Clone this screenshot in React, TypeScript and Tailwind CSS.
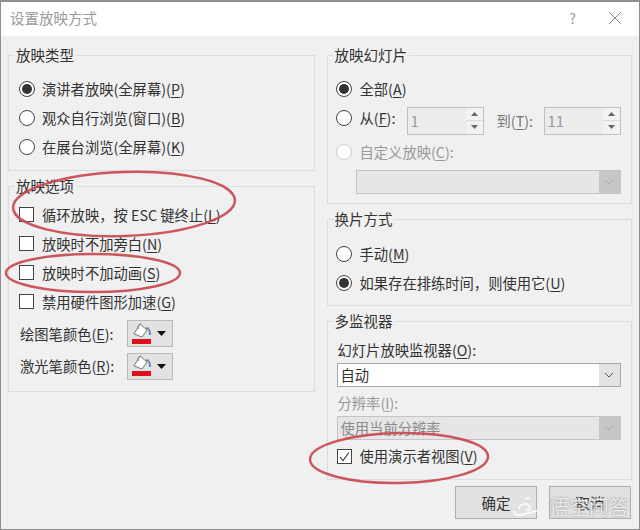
const font = { fontFamily: '"Noto Sans CJK SC", "Liberation Sans", sans-serif' };

function Radio({ checked, disabled }: { checked?: boolean; disabled?: boolean }) {
  return (
    <span className={`flex h-[16px] w-[16px] shrink-0 items-center justify-center rounded-full border bg-white ${disabled ? "border-[#d0d0d0]" : "border-[#444]"}`}>
      {checked && <span className="h-[10px] w-[10px] rounded-full bg-[#333]" />}
    </span>
  );
}

function Check({ checked }: { checked?: boolean }) {
  return (
    <span className="flex h-[15px] w-[15px] shrink-0 items-center justify-center border border-[#444] bg-white">
      {checked && (
        <svg width="13" height="13" viewBox="0 0 13 13" fill="none" stroke="#333" strokeWidth="1.1">
          <path d="M2 7l3 3.5L11 2.5" />
        </svg>
      )}
    </span>
  );
}

function Label({ text, hot, after = "" }: { text: string; hot: string; after?: string }) {
  return (
    <span className="whitespace-nowrap">
      {text}(<span className="underline underline-offset-2">{hot}</span>){after}
    </span>
  );
}

function Group({ title, className, children }: { title: string; className: string; children: React.ReactNode }) {
  return (
    <div className={`border border-[#dcdcdc] ${className}`}>
      <div className="ml-[5px] -mt-[12px] w-fit bg-[#f0f0f0] px-[2px] text-[14.5px] leading-[22px] text-[#333]">{title}</div>
      {children}
    </div>
  );
}

function Chevron({ color }: { color: string }) {
  return (
    <svg width="10" height="6" viewBox="0 0 10 6" fill="none" stroke={color} strokeWidth="1">
      <path d="M1 1l4 4 4-4" />
    </svg>
  );
}

function Select({ value, disabled, className }: { value?: string; disabled?: boolean; className: string }) {
  return (
    <div className={`flex h-[24px] items-stretch border ${disabled ? "border-[#c4c4c4] bg-[#e6e6e6] text-[#8a8a8a]" : "border-[#a8a8a8] bg-white text-[#333]"} ${className}`}>
      <span className="flex-1 pl-[3px] text-[14.3px] leading-[21px]">{value}</span>
      <span className={`flex w-[21px] items-center justify-center ${disabled ? "bg-[#c6c6c6]" : "bg-[#e2e2e2]"}`}>
        <Chevron color={disabled ? "#a8a8a8" : "#555"} />
      </span>
    </div>
  );
}

function Spinner({ value }: { value: string }) {
  return (
    <div className="mt-[6px] flex h-[28px] w-[77px] shrink-0 items-stretch border border-[#c0c0c0] bg-[#ececec]">
      <span className="flex-1 pl-[3px] text-[15px] leading-[26px] text-[#999]">{value}</span>
      <span className="flex w-[17px] flex-col bg-[#f2f2f2]">
        <span className="flex flex-1 items-center justify-center border-b border-[#d8d8d8]">
          <svg width="7" height="4" viewBox="0 0 7 4"><path d="M3.5 0L7 4H0z" fill="#666" /></svg>
        </span>
        <span className="flex flex-1 items-center justify-center">
          <svg width="7" height="4" viewBox="0 0 7 4"><path d="M0 0h7L3.5 4z" fill="#666" /></svg>
        </span>
      </span>
    </div>
  );
}

function ColorButton() {
  return (
    <div className="flex h-[27px] w-[46px] items-center gap-[5px] border border-[#b8b8b8] bg-[#e2e2e2] pl-[3px]">
      <svg width="21" height="22" viewBox="0 0 21 22">
        <path d="M9 1l7 6-5 7-8-3z" fill="#fff" stroke="#777" strokeWidth="1" />
        <path d="M7 6c0-3 1-5 3-5" fill="none" stroke="#777" strokeWidth="1" />
        <path d="M15 5c3 0 4 3 4 7" fill="none" stroke="#6b93b8" strokeWidth="2" />
        <rect x="1" y="16" width="19" height="5" fill="#e0101a" />
      </svg>
      <svg width="9" height="5" viewBox="0 0 9 5"><path d="M0 0h9L4.5 5z" fill="#111" /></svg>
    </div>
  );
}

function Row({ className = "h-[29px]", children }: { className?: string; children: React.ReactNode }) {
  return <div className={`flex items-center ${className}`}>{children}</div>;
}

export default function App() {
  return (
    <div className="relative flex h-[530px] w-[640px] flex-col overflow-hidden border border-t-2 border-[#8f8f8f] bg-[#f0f0f0] text-[14.3px] text-[#333]" style={font}>
      <div className="flex h-[34px] shrink-0 items-center justify-between bg-white pb-[2px] pl-[9px] pr-[18px]">
        <span className="text-[14.5px] text-[#9a9a9a]">设置放映方式</span>
        <div className="flex items-center gap-[33px]">
          <span className="text-[14px] text-[#999]">?</span>
          <svg width="12" height="12" viewBox="0 0 12 12" stroke="#888" strokeWidth="1"><path d="M0 0l12 12M12 0L0 12" /></svg>
        </div>
      </div>

      <div className="flex flex-1 gap-[12px] pl-[7px] pt-[19px] pr-[7px]">
        <div className="flex w-[307px] flex-col gap-[15px]">
          <Group title="放映类型" className="h-[116px]">
            <div className="pl-[10px] pt-[8px]">
              <Row><Radio checked /><span className="ml-[7px]"><Label text="演讲者放映(全屏幕)" hot="P" /></span></Row>
              <Row><Radio /><span className="ml-[7px]"><Label text="观众自行浏览(窗口)" hot="B" /></span></Row>
              <Row><Radio /><span className="ml-[7px]"><Label text="在展台浏览(全屏幕)" hot="K" /></span></Row>
            </div>
          </Group>
          <Group title="放映选项" className="h-[206px]">
            <div className="pl-[10px] pt-[3px]">
              <Row><Check /><span className="ml-[8px]"><Label text="循环放映，按 ESC 键终止" hot="L" /></span></Row>
              <Row><Check /><span className="ml-[8px]"><Label text="放映时不加旁白" hot="N" /></span></Row>
              <Row><Check /><span className="ml-[8px]"><Label text="放映时不加动画" hot="S" /></span></Row>
              <Row><Check /><span className="ml-[8px]"><Label text="禁用硬件图形加速" hot="G" /></span></Row>
              <Row className="mt-[1px] h-[33px]"><span className="w-[108px] pl-px"><Label text="绘图笔颜色" hot="E" after=":" /></span><ColorButton /></Row>
              <Row className="h-[32px]"><span className="w-[108px] pl-px"><Label text="激光笔颜色" hot="R" after=":" /></span><ColorButton /></Row>
            </div>
          </Group>
        </div>

        <div className="flex w-[306px] flex-col">
          <Group title="放映幻灯片" className="h-[149px]">
            <div className="pl-[8px] pt-[10px]">
              <Row className="h-[26px]"><Radio checked /><span className="ml-[8px]"><Label text="全部" hot="A" /></span></Row>
              <Row className="h-[31px]">
                <Radio />
                <span className="ml-[8px] w-[47px]"><Label text="从" hot="F" after=":" /></span>
                <Spinner value="1" />
                <span className="ml-[13px] mt-[6px] w-[47px] text-[#777]"><Label text="到" hot="T" after=":" /></span>
                <Spinner value="11" />
              </Row>
              <Row className="h-[37px]"><Radio disabled /><span className="ml-[8px] text-[#999]"><Label text="自定义放映" hot="C" after=":" /></span></Row>
              <Select disabled className="ml-[20px] w-[265px]" />
            </div>
          </Group>
          <Group title="换片方式" className="mt-[15px] h-[87px]">
            <div className="pl-[8px] pt-[9px]">
              <Row><Radio /><span className="ml-[8px]"><Label text="手动" hot="M" /></span></Row>
              <Row><Radio checked /><span className="ml-[8px]"><Label text="如果存在排练时间，则使用它" hot="U" /></span></Row>
            </div>
          </Group>
          <Group title="多监视器" className="mt-[15px] h-[159px]">
            <div className="pl-[9px] pt-[3px]">
              <div className="h-[28px] pl-px leading-[30px]"><Label text="幻灯片放映监视器" hot="O" after=":" /></div>
              <Select value="自动" className="w-[284px]" />
              <div className="mt-[5px] h-[24px] pl-px leading-[22px] text-[#999]"><Label text="分辨率" hot="I" after=":" /></div>
              <Select disabled value="使用当前分辨率" className="w-[284px]" />
              <Row className="mt-[4px] h-[24px]"><Check checked /><span className="ml-[8px]"><Label text="使用演示者视图" hot="V" /></span></Row>
            </div>
          </Group>
          <div className="mt-[6px] flex justify-end gap-[12px] pr-px">
            <button className="h-[33px] w-[82px] border border-[#adadad] bg-[#e1e1e1] text-[14.5px]">确定</button>
            <button className="h-[33px] w-[82px] border border-[#adadad] bg-[#e1e1e1] text-[14.5px]">取消</button>
          </div>
        </div>
      </div>

      {/* red hand-drawn marks over the dialog */}
      <svg className="absolute -left-px -top-[2px]" width="640" height="530" fill="none" stroke="#c8474c" strokeWidth="2.5" opacity="0.9">
        <ellipse cx="124" cy="204" rx="111" ry="32" transform="rotate(-2 124 204)" />
        <ellipse cx="93" cy="273" rx="87" ry="19" />
        <ellipse cx="399" cy="458" rx="89" ry="25" transform="rotate(-1 399 458)" />
      </svg>

      {/* watermark */}
      <div className="absolute right-[10px] bottom-[8px] flex items-center gap-[10px] text-[20px] leading-[28px] text-white/80 [text-shadow:0_0_2px_#777]">
        <svg width="28" height="20" viewBox="0 0 28 20" fill="none" stroke="#fff" strokeWidth="2" opacity="0.85">
          <path d="M2 14c2 5 8 5 12 3s10-1 12-4M8 12c0-3 3-5 6-5s5 2 5 4-3 3-4 1M14 2c2-1 4-1 5 0" />
        </svg>
        <span>悟空问答</span>
      </div>
    </div>
  );
}
